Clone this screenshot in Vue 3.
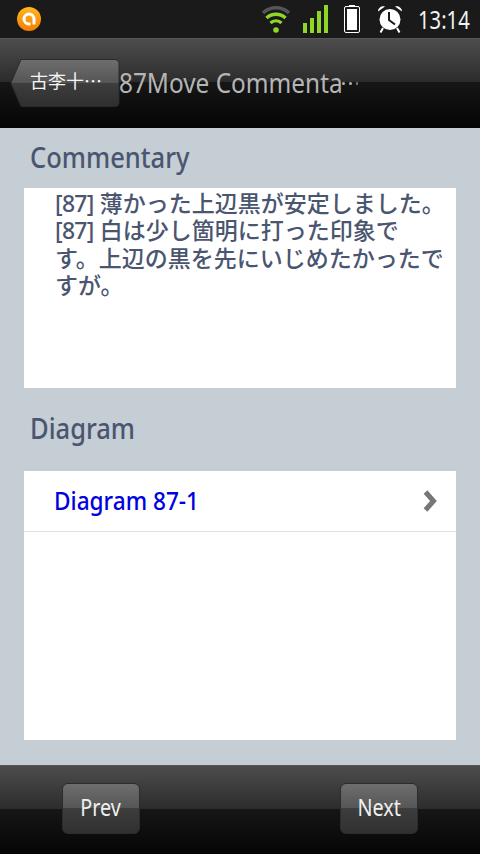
<script setup>
const lines = [
  { tag: '[87]', text: ' 薄かった上辺黒が安定しました。' },
  { tag: '[87]', text: ' 白は少し箇明に打った印象で' },
  { tag: '', text: 'す。上辺の黒を先にいじめたかったで' },
  { tag: '', text: 'すが。' },
]
</script>

<template>
  <div class="page">
    <header class="status">
      <svg class="notify" viewBox="0 0 24 24" width="24" height="24">
        <defs>
          <linearGradient id="og" x1="0" y1="0" x2="0" y2="1">
            <stop offset="0" stop-color="#ffb81c" />
            <stop offset="1" stop-color="#f57c00" />
          </linearGradient>
        </defs>
        <circle cx="12" cy="12" r="12" fill="url(#og)" />
        <path d="M17 17.500V12a5 5 0 1 0-5 5h1.500" fill="none" stroke="#fff" stroke-width="3" />
      </svg>
      <div class="status-right">
        <svg class="ic-wifi" viewBox="0 0 28 28" width="28" height="28">
          <path d="M1 8C8 1 20 1 27 8" fill="none" stroke="#555" stroke-width="3.500" />
          <path d="M4.500 13C10 8 18 8 23.500 13" fill="none" stroke="#8fd62a" stroke-width="3.500" />
          <path d="M8.500 18C11.500 15 16.500 15 19.500 18" fill="none" stroke="#8fd62a" stroke-width="3.200" />
          <circle cx="14" cy="25" r="2.800" fill="#8fd62a" />
        </svg>
        <svg class="ic-signal" viewBox="0 0 25 28" width="25" height="28">
          <rect x="0" y="18" width="4" height="10" fill="#8fd62a" />
          <rect x="7" y="13" width="4" height="15" fill="#8fd62a" />
          <rect x="14" y="6" width="4" height="22" fill="#8fd62a" />
          <rect x="21" y="0" width="4" height="28" fill="#8fd62a" />
        </svg>
        <svg class="ic-batt" viewBox="0 0 16 28" width="16" height="28">
          <rect x="5" y="0" width="6" height="2" fill="#fff" />
          <rect x="0.500" y="1.500" width="15" height="26" rx="1.500" fill="none" stroke="#fff" />
          <rect x="3" y="4" width="10" height="21" fill="#fff" />
        </svg>
        <svg class="ic-alarm" viewBox="0 0 26 28" width="26" height="28">
          <path d="M1 6.500C1 2.500 5 .5 8 1.500zM25 6.500C25 2.500 21 .5 18 1.500z" fill="#fff" />
          <path d="M6 23L3.500 27.500M20 23l2.500 4.500" stroke="#fff" stroke-width="2" />
          <circle cx="13" cy="14.500" r="10.500" fill="#fff" />
          <path d="M12 7v8l6 4.500" fill="none" stroke="#1a1a1a" stroke-width="2" />
        </svg>
        <span class="clock"><span class="narrow">13:14</span></span>
      </div>
    </header>

    <nav class="navbar">
      <button class="back">
        <svg class="back-shape" viewBox="0 0 110 48" width="110" height="48" preserveAspectRatio="none">
          <defs>
            <linearGradient id="bg" x1="0" y1="0" x2="0" y2="1">
              <stop offset="0" stop-color="#6e6e6e" />
              <stop offset="0.5" stop-color="#555" />
              <stop offset="0.5" stop-color="#3d3d3d" />
              <stop offset="1" stop-color="#2f2f2f" />
            </linearGradient>
          </defs>
          <path d="M11 .5H105a4 4 0 0 1 4 4V43.500a4 4 0 0 1-4 4H11L.8 24z" fill="url(#bg)" stroke="#2a2a2a" />
        </svg>
        <span class="back-label">古李十…</span>
      </button>
      <div class="title"><span class="narrow">87Move Commenta</span><span class="dots"><i></i><i></i><i></i></span></div>
    </nav>

    <main class="content">
      <h2 class="heading first"><span class="narrow">Commentary</span></h2>
      <section class="comment">
        <div v-for="l in lines" :key="l.text"><span class="tag">{{ l.tag }}</span>{{ l.text }}</div>
      </section>
      <h2 class="heading second"><span class="narrow">Diagram</span></h2>
      <section class="list">
        <div class="row">
          <span class="row-label"><span class="narrow">Diagram 87-1</span></span>
          <svg viewBox="0 0 16 24" width="16" height="24">
            <path d="M3.500 3L11.500 12 3.500 21" fill="none" stroke="#777" stroke-width="5" />
          </svg>
        </div>
      </section>
    </main>

    <footer class="toolbar">
      <button class="tbtn"><span class="narrow">Prev</span></button>
      <button class="tbtn"><span class="narrow">Next</span></button>
    </footer>
  </div>
</template>

<style scoped>
.page {
  width: 480px;
  height: 854px;
  display: flex;
  flex-direction: column;
  overflow: hidden;
  font-family: "Noto Sans", "Open Sans", "Noto Sans CJK JP", sans-serif;
}
.narrow {
  display: inline-block;
  white-space: nowrap;
  transform: scaleX(0.88);
  transform-origin: left center;
}
.status {
  height: 38px;
  box-sizing: border-box;
  background: #1a1a1a;
  display: flex;
  align-items: center;
  justify-content: space-between;
  padding: 0 10px 0 17px;
}
.notify { margin-bottom: 1px; }
.status-right {
  display: flex;
  align-items: center;
}
.ic-wifi { margin-right: 13px; }
.ic-signal { margin-right: 16px; }
.ic-batt { margin-right: 17px; }
.ic-alarm { margin-right: 15px; }
.clock {
  width: 52px;
  color: #f2f2f2;
  font-size: 25px;
  line-height: 38px;
  white-space: nowrap;
}
.clock .narrow { transform: scaleX(0.81); }
.navbar {
  height: 90px;
  box-sizing: border-box;
  border-top: 1px solid #555;
  background: linear-gradient(#4d4d4d 0%, #2c2c2c 48%, #161616 48%, #050505 100%);
  display: flex;
  align-items: center;
  padding: 0 0 0 10px;
}
.back {
  position: relative;
  width: 110px;
  height: 48px;
  padding: 0;
  border: 0;
  background: none;
  flex: none;
  margin-top: -1px;
}
.back-shape { position: absolute; left: 0; top: 0; }
.back-label {
  position: absolute;
  left: 20px;
  top: 8px;
  color: #f4f4f4;
  font-size: 18px;
  line-height: 26px;
  white-space: nowrap;
  font-family: "Noto Sans CJK JP", sans-serif;
}
.title {
  margin-left: -1px;
  color: #b5b5b5;
  font-size: 28px;
  line-height: 36px;
  margin-top: -3px;
  white-space: nowrap;
  display: flex;
  align-items: center;
  width: 240px;
}
.title .narrow { width: 223px; flex: none; transform: scaleX(0.87); }
.dots {
  display: flex;
  gap: 4px;
  margin-top: 3px;
}
.dots i {
  width: 3px;
  height: 3px;
  border-radius: 50%;
  background: #b5b5b5;
}
.dots i:last-child { width: 2px; background: #8a8a8a; }
.content {
  flex: 1;
  background: #c5cdd5;
  padding: 0 24px;
  display: flex;
  flex-direction: column;
}
.heading {
  margin: 0;
  color: #4a5670;
  font-size: 29px;
  font-weight: 500;
  line-height: 36px;
  padding-left: 6px;
}
.heading.first { margin-top: 11px; margin-bottom: 13px; }
.heading.second { margin-top: 22px; margin-bottom: 25px; }
.comment {
  height: 200px;
  box-sizing: border-box;
  background: #fff;
  padding: 2px 0 0 31px;
  color: #4a5670;
  font-size: 23px;
  line-height: 27.300px;
  font-weight: 500;
  white-space: nowrap;
  font-family: "Noto Sans", "Noto Sans CJK JP", sans-serif;
}
.tag { letter-spacing: -0.7px; }
.list {
  height: 269px;
  background: #fff;
}
.row {
  height: 61px;
  box-sizing: border-box;
  border-bottom: 1px solid #e0e0e0;
  display: flex;
  align-items: center;
  justify-content: space-between;
  padding: 0 18px 0 30px;
}
.row-label {
  color: #0000e0;
  font-size: 26px;
  line-height: 32px;
  font-weight: 500;
  margin-top: -3px;
}
.row-label .narrow { transform: scaleX(0.87); }
.toolbar {
  height: 89px;
  box-sizing: border-box;
  border-top: 1px solid #555;
  background: linear-gradient(#4d4d4d 0%, #2c2c2c 49%, #161616 49%, #050505 100%);
  display: flex;
  align-items: center;
  justify-content: space-between;
  padding: 0 62px 0 62px;
}
.tbtn {
  width: 78px;
  height: 51px;
  margin-top: -3px;
  border: 1px solid #2c2c2c;
  border-radius: 6px;
  background: linear-gradient(#6e6e6e 0%, #555 50%, #3d3d3d 50%, #303030 100%);
  color: #f0f0f0;
  font-size: 23px;
  line-height: 30px;
  font-family: "Noto Sans", sans-serif;
  padding: 0 0 4px;
}
.tbtn .narrow { transform: scaleX(0.86); transform-origin: center; }
</style>
